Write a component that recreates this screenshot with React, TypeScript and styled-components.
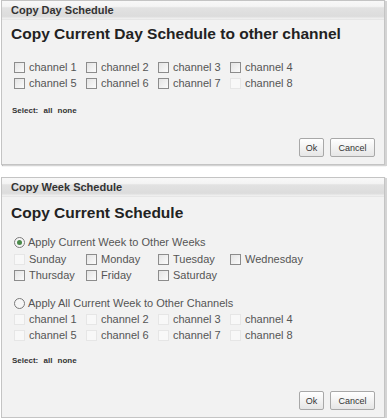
import React from "react";
import styled, { createGlobalStyle } from "styled-components";

const Global = createGlobalStyle`
  html, body { margin: 0; padding: 0; background: #ffffff; }
  body { font-family: "Liberation Sans", Arial, sans-serif; }
`;

const Page = styled.div`
  width: 387px;
  display: flex;
  flex-direction: column;
  gap: 12px;
  padding: 0 1px;
  box-sizing: border-box;
`;

const Dialog = styled.div`
  display: flex;
  flex-direction: column;
  background: #f2f2f2;
  border: 1px solid #c4c4c4;
  box-shadow: 2px 1px 0 #d4d4d4, 1px 1px 1px #bbbbbb;
  width: 382px;
`;

const TitleBar = styled.div`
  height: 18px;
  line-height: 18px;
  padding-left: 9px;
  font-size: 11px;
  font-weight: bold;
  color: #333;
  background: linear-gradient(#f8f8f8 0%, #f4f4f4 30%, #e2e2e2 38%, #dcdcdc 85%, #f2f2f2 100%);
  border-bottom: 1px solid #e6e6e6;
`;

const Body = styled.div<{ $pb: number }>`
  display: flex;
  flex-direction: column;
  padding: 0 9px ${(p) => p.$pb}px 9px;
`;

const Heading = styled.div<{ $mt: number }>`
  margin-top: ${(p) => p.$mt}px;
  height: 20px;
  line-height: 20px;
  font-size: 15.5px;
  font-weight: bold;
  color: #222;
`;

const Grid = styled.div<{ $mt: number }>`
  margin-top: ${(p) => p.$mt}px;
  display: grid;
  grid-template-columns: repeat(4, 72px);
  grid-auto-rows: 16px;
  padding-left: 3px;
`;

const Item = styled.label`
  display: flex;
  align-items: center;
  gap: 4px;
  font-size: 11px;
  color: #555;
  white-space: nowrap;
`;

const Box = styled.span<{ $disabled?: boolean }>`
  width: 11px;
  height: 11px;
  box-sizing: border-box;
  border: 1px solid ${(p) => (p.$disabled ? "#e6e6e6" : "#8c8c8c")};
  background: ${(p) => (p.$disabled ? "#f8f8f8" : "linear-gradient(135deg, #e4e4e4, #fbfbfb)")};
  flex: none;
`;

const RadioRow = styled.label<{ $mt: number }>`
  margin-top: ${(p) => p.$mt}px;
  height: 16px;
  display: flex;
  align-items: center;
  gap: 3px;
  padding-left: 3px;
  font-size: 11px;
  color: #555;
`;

const Radio = styled.span<{ $checked?: boolean }>`
  width: 11px;
  height: 11px;
  box-sizing: border-box;
  border-radius: 50%;
  border: 1px solid #7a7a7a;
  background: #f6f6f6;
  display: flex;
  align-items: center;
  justify-content: center;
  flex: none;
  &::after {
    content: "";
    width: 5px;
    height: 5px;
    border-radius: 50%;
    background: ${(p) => (p.$checked ? "#4a8a4a" : "transparent")};
  }
`;

const SelectLine = styled.div<{ $mt: number }>`
  margin-top: ${(p) => p.$mt}px;
  height: 10px;
  line-height: 10px;
  font-size: 8px;
  font-weight: bold;
  color: #333;
  padding-left: 1px;
  word-spacing: 3px;
`;

const Buttons = styled.div<{ $mt: number }>`
  margin-top: ${(p) => p.$mt}px;
  display: flex;
  justify-content: flex-end;
  gap: 6px;
`;

const Button = styled.button<{ $w: number }>`
  width: ${(p) => p.$w}px;
  height: 19px;
  padding: 0;
  font-family: "Liberation Sans", Arial, sans-serif;
  font-size: 9px;
  color: #333;
  border: 1px solid #a8a8a8;
  border-radius: 2px;
  background: linear-gradient(#ffffff, #e6e6e6);
`;

type Opt = { label: string; disabled?: boolean };

const CheckGrid = ({ items, mt }: { items: Opt[]; mt: number }) => (
  <Grid $mt={mt}>
    {items.map((it) => (
      <Item key={it.label}>
        <Box $disabled={it.disabled} />
        {it.label}
      </Item>
    ))}
  </Grid>
);

const channels = (allDisabled: boolean, disabledIdx: number[] = []): Opt[] =>
  Array.from({ length: 8 }, (_, i) => ({
    label: `channel ${i + 1}`,
    disabled: allDisabled || disabledIdx.includes(i),
  }));

const days: Opt[] = [
  { label: "Sunday", disabled: true },
  { label: "Monday" },
  { label: "Tuesday" },
  { label: "Wednesday" },
  { label: "Thursday" },
  { label: "Friday" },
  { label: "Saturday" },
];

export default function App() {
  return (
    <>
      <Global />
      <Page>
        <Dialog>
          <TitleBar>Copy Day Schedule</TitleBar>
          <Body $pb={7}>
            <Heading $mt={4}>Copy Current Day Schedule to other channel</Heading>
            <CheckGrid items={channels(false, [7])} mt={15} />
            <SelectLine $mt={15}>Select: all none</SelectLine>
            <Buttons $mt={22}>
              <Button $w={25}>Ok</Button>
              <Button $w={45}>Cancel</Button>
            </Buttons>
          </Body>
        </Dialog>
        <Dialog>
          <TitleBar>Copy Week Schedule</TitleBar>
          <Body $pb={7}>
            <Heading $mt={6}>Copy Current Schedule</Heading>
            <RadioRow $mt={11}>
              <Radio $checked />
              Apply Current Week to Other Weeks
            </RadioRow>
            <CheckGrid items={days} mt={1} />
            <RadioRow $mt={12}>
              <Radio />
              Apply All Current Week to Other Channels
            </RadioRow>
            <CheckGrid items={channels(true)} mt={0} />
            <SelectLine $mt={13}>Select: all none</SelectLine>
            <Buttons $mt={25}>
              <Button $w={25}>Ok</Button>
              <Button $w={45}>Cancel</Button>
            </Buttons>
          </Body>
        </Dialog>
      </Page>
    </>
  );
}
